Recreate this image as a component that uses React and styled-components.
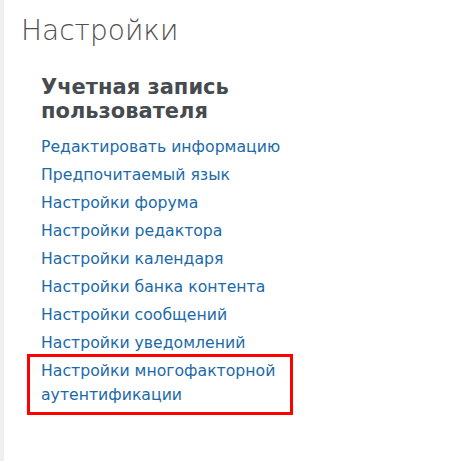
import React from "react";
import styled, { createGlobalStyle } from "styled-components";

const GlobalStyle = createGlobalStyle`
  html, body { margin: 0; padding: 0; background: #fff; }
  #root { min-height: 100vh; }
`;

const Page = styled.div`
  display: flex;
  min-height: 461px;
  font-family: "DejaVu Sans", "Noto Sans", sans-serif;
`;

const SideStrip = styled.div`
  width: 4px;
  flex: 0 0 4px;
  background: #efefef;
`;

const Main = styled.main`
  flex: 1;
  padding: 14px 0 0 17px;
`;

const Title = styled.h1`
  margin: 0;
  font-size: 28px;
  font-weight: 300;
  line-height: 34px;
  color: #4f4f4f;
`;

const Section = styled.section`
  width: 270px;
  margin: 27px 0 0 20px;
`;

const SectionHeading = styled.h3`
  margin: 0;
  font-size: 21px;
  font-weight: 700;
  line-height: 24px;
  color: #464b50;
`;

const LinkList = styled.ul`
  list-style: none;
  margin: 12px 0 0;
  padding: 0;
  display: flex;
  flex-direction: column;
  align-items: flex-start;
  gap: 4px;
`;

const Item = styled.li`
  position: relative;
  font-size: 15.7px;
  line-height: 24px;

  ${(p) =>
    p.$highlight &&
    `
    &::after {
      content: "";
      position: absolute;
      top: -5px;
      left: -14px;
      width: 266px;
      height: 61px;
      box-sizing: border-box;
      border: 3px solid #ff0000;
      pointer-events: none;
    }
  `}
`;

const Link = styled.a`
  color: #1c6aa8;
  text-decoration: none;
`;

const links = [
  "Редактировать информацию",
  "Предпочитаемый язык",
  "Настройки форума",
  "Настройки редактора",
  "Настройки календаря",
  "Настройки банка контента",
  "Настройки сообщений",
  "Настройки уведомлений",
  "Настройки многофакторной аутентификации",
];

export default function App() {
  return (
    <>
      <GlobalStyle />
      <Page>
        <SideStrip />
        <Main>
          <Title>Настройки</Title>
          <Section>
            <SectionHeading>Учетная запись пользователя</SectionHeading>
            <LinkList>
              {links.map((l, i) => (
                <Item key={l} $highlight={i === links.length - 1}>
                  <Link href="#">{l}</Link>
                </Item>
              ))}
            </LinkList>
          </Section>
        </Main>
      </Page>
    </>
  );
}
